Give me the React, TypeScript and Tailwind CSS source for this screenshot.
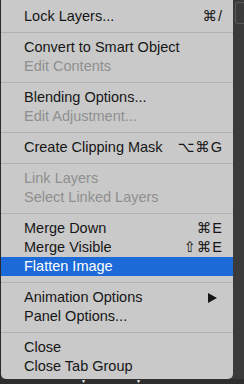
import React from 'react';

type Item =
  | { kind: 'sep' }
  | { kind: 'item'; label: string; shortcut?: string; disabled?: boolean; active?: boolean; submenu?: boolean };

const items: Item[] = [
  { kind: 'item', label: 'Lock Layers...', shortcut: '⌘/' },
  { kind: 'sep' },
  { kind: 'item', label: 'Convert to Smart Object' },
  { kind: 'item', label: 'Edit Contents', disabled: true },
  { kind: 'sep' },
  { kind: 'item', label: 'Blending Options...' },
  { kind: 'item', label: 'Edit Adjustment...', disabled: true },
  { kind: 'sep' },
  { kind: 'item', label: 'Create Clipping Mask', shortcut: '⌥⌘G' },
  { kind: 'sep' },
  { kind: 'item', label: 'Link Layers', disabled: true },
  { kind: 'item', label: 'Select Linked Layers', disabled: true },
  { kind: 'sep' },
  { kind: 'item', label: 'Merge Down', shortcut: '⌘E' },
  { kind: 'item', label: 'Merge Visible', shortcut: '⇧⌘E' },
  { kind: 'item', label: 'Flatten Image', active: true },
  { kind: 'sep' },
  { kind: 'item', label: 'Animation Options', submenu: true },
  { kind: 'item', label: 'Panel Options...' },
  { kind: 'sep' },
  { kind: 'item', label: 'Close' },
  { kind: 'item', label: 'Close Tab Group' },
];

const MenuRow = ({ item }: { item: Item }) => {
  if (item.kind === 'sep') {
    return (
      <div className="h-[12px] flex items-center">
        <div className="h-px w-full bg-[#b1b1b1]" />
      </div>
    );
  }
  const color = item.active ? 'bg-[#1b6ad8] text-white' : item.disabled ? 'text-[#8f8f8f]' : 'text-[#161616]';
  return (
    <div className={`h-[19px] flex items-center pl-[23px] pr-[10px] text-[14.5px] leading-none ${color}`}>
      <span className="flex-1 whitespace-nowrap">{item.label}</span>
      {item.shortcut && <span className="whitespace-nowrap tracking-[1px]">{item.shortcut}</span>}
      {item.submenu && (
        <svg width="9" height="10" viewBox="0 0 9 10" className="mr-[6px]">
          <path d="M0 0 L9 5 L0 10 Z" fill="#161616" />
        </svg>
      )}
    </div>
  );
};

export default function App() {
  return (
    <div
      className="w-[244px] h-[384px] bg-[#3b3b3b] flex flex-col overflow-hidden"
      style={{ fontFamily: '"Liberation Sans", "DejaVu Sans", sans-serif' }}
    >
      <div className="flex h-[380px]">
        <div className="w-px bg-[#2a2a2a]" />
        <div className="w-[232px] bg-[#c9c9c9] rounded-b-[5px] pt-[7px] flex flex-col">
          {items.map((it, i) => (
            <MenuRow key={i} item={it} />
          ))}
        </div>
        <div className="flex-1 pt-[2px] pl-[2px]">
          <div className="h-[22px] border border-r-0 border-[#5a5a5a] rounded-l-[3px]" />
        </div>
      </div>
      <div className="flex-1 bg-[#2e2e2e] flex">
        <div className="w-[81px]" />
        <span className="text-white text-[5px] leading-none">▼</span>
        <div className="w-[50px]" />
        <span className="text-white text-[5px] leading-none">▼</span>
      </div>
    </div>
  );
}
